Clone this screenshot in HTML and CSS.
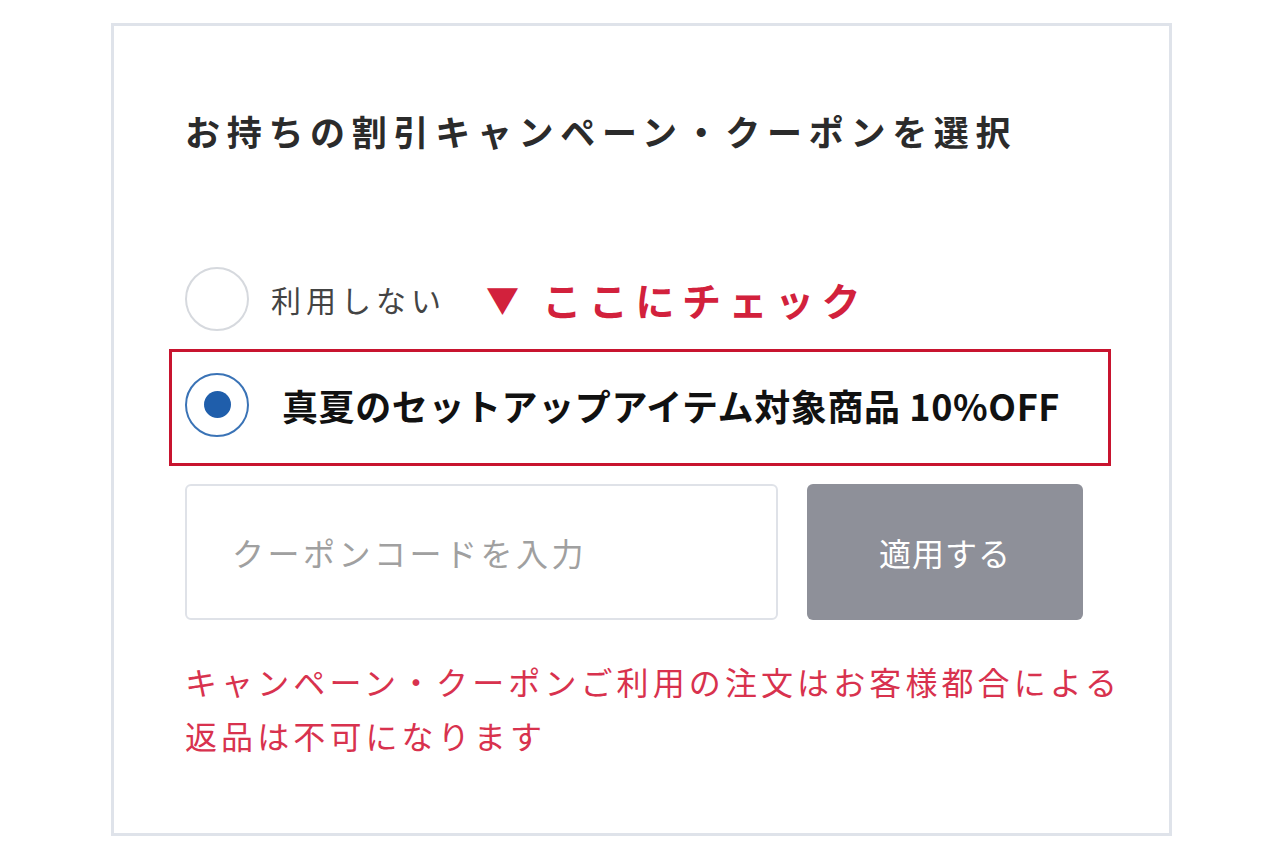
FILE: index.html
```html
<!DOCTYPE html>
<html lang="ja">
<head>
<meta charset="utf-8">
<title>クーポン選択</title>
<link rel="stylesheet" href="styles.css">
</head>
<body>
<div class="card">
  <h2 class="title">お持ちの割引キャンペーン・クーポンを選択</h2>
  <div class="option option-plain">
    <span class="radio"></span>
    <span class="option-label">利用しない</span>
    <span class="hint"><span class="hint-mark">▼</span>ここにチェック</span>
  </div>
  <div class="option option-selected">
    <span class="radio radio-on"><span class="dot"></span></span>
    <span class="option-label strong">真夏のセットアップアイテム対象商品 10%OFF</span>
  </div>
  <div class="code-row">
    <div class="code-input">クーポンコードを入力</div>
    <div class="code-button">適用する</div>
  </div>
  <p class="note">キャンペーン・クーポンご利用の注文はお客様都合による<br>返品は不可になります</p>
</div>
</body>
</html>
```
FILE: styles.css
```css
html, body {
  margin: 0;
  padding: 0;
  background: #ffffff;
}
body {
  font-family: "Noto Sans CJK JP", "Noto Sans", sans-serif;
  color: #333;
}
.card {
  box-sizing: border-box;
  margin: 23px 0 0 111px;
  width: 1061px;
  height: 813px;
  border: 3px solid #dfe3ea;
  padding: 80px 0 0 71px;
}
.title {
  margin: 0;
  font-size: 35px;
  line-height: 50px;
  font-weight: 700;
  letter-spacing: 6.7px;
  color: #2b2b2b;
}
.option {
  display: flex;
  align-items: center;
}
.option-plain {
  margin-top: 111px;
  height: 64px;
}
.radio {
  box-sizing: border-box;
  width: 64px;
  height: 64px;
  border-radius: 50%;
  border: 2px solid #d6d9de;
  flex: none;
  display: flex;
  align-items: center;
  justify-content: center;
}
.radio-on {
  border: 2.5px solid #3a73b6;
}
.dot {
  width: 27px;
  height: 27px;
  border-radius: 50%;
  background: #1f5eab;
}
.option-label {
  margin-left: 22px;
  font-size: 30px;
  letter-spacing: 5px;
  color: #444;
}
.hint {
  margin-left: 40px;
  color: #d2213c;
  font-weight: 700;
  font-size: 39px;
  letter-spacing: 7.5px;
}
.hint-mark {
  font-size: 33px;
  margin-right: 16px;
  position: relative;
  top: -3px;
}
.option-selected {
  box-sizing: border-box;
  margin: 18px 0 0 -16px;
  width: 942px;
  height: 117px;
  border: 3px solid #c8142f;
  padding: 0 0 6px 13px;
}
.strong {
  margin-left: 33px;
  font-size: 36px;
  font-weight: 700;
  letter-spacing: 0.6px;
  color: #111;
}
.code-row {
  display: flex;
  gap: 29px;
  margin-top: 18px;
}
.code-input {
  box-sizing: border-box;
  width: 593px;
  height: 136px;
  border: 2px solid #dfe2e8;
  border-radius: 6px;
  display: flex;
  align-items: center;
  padding-left: 45px;
  font-size: 32px;
  letter-spacing: 3.5px;
  color: #a0a0a0;
}
.code-button {
  width: 276px;
  height: 136px;
  border-radius: 6px;
  background: #8e9099;
  color: #fff;
  font-size: 32px;
  letter-spacing: 1px;
  display: flex;
  align-items: center;
  justify-content: center;
}
.note {
  margin: 34px 0 0;
  font-size: 32px;
  line-height: 54px;
  letter-spacing: 4.1px;
  color: #d8324e;
}
```
